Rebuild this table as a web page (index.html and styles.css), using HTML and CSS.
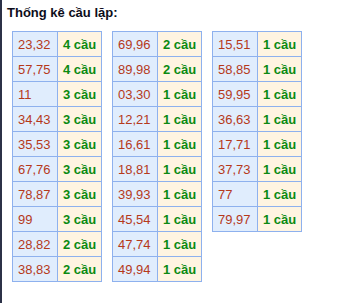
FILE: index.html
```html
<!DOCTYPE html>
<html lang="vi">
<head>
<meta charset="utf-8">
<link rel="stylesheet" href="styles.css">
</head>
<body>
<div class="wrap">
  <h3 class="title">Thống kê cầu lặp:</h3>
  <div class="tables">
    <table class="tk">
      <colgroup><col class="c1"><col class="c2"></colgroup>
      <tr><td class="num">23,32</td><td class="cnt">4 cầu</td></tr>
      <tr><td class="num">57,75</td><td class="cnt">4 cầu</td></tr>
      <tr><td class="num">11</td><td class="cnt">3 cầu</td></tr>
      <tr><td class="num">34,43</td><td class="cnt">3 cầu</td></tr>
      <tr><td class="num">35,53</td><td class="cnt">3 cầu</td></tr>
      <tr><td class="num">67,76</td><td class="cnt">3 cầu</td></tr>
      <tr><td class="num">78,87</td><td class="cnt">3 cầu</td></tr>
      <tr><td class="num">99</td><td class="cnt">3 cầu</td></tr>
      <tr><td class="num">28,82</td><td class="cnt">2 cầu</td></tr>
      <tr><td class="num">38,83</td><td class="cnt">2 cầu</td></tr>
    </table>
    <table class="tk">
      <colgroup><col class="c1"><col class="c2"></colgroup>
      <tr><td class="num">69,96</td><td class="cnt">2 cầu</td></tr>
      <tr><td class="num">89,98</td><td class="cnt">2 cầu</td></tr>
      <tr><td class="num">03,30</td><td class="cnt">1 cầu</td></tr>
      <tr><td class="num">12,21</td><td class="cnt">1 cầu</td></tr>
      <tr><td class="num">16,61</td><td class="cnt">1 cầu</td></tr>
      <tr><td class="num">18,81</td><td class="cnt">1 cầu</td></tr>
      <tr><td class="num">39,93</td><td class="cnt">1 cầu</td></tr>
      <tr><td class="num">45,54</td><td class="cnt">1 cầu</td></tr>
      <tr><td class="num">47,74</td><td class="cnt">1 cầu</td></tr>
      <tr><td class="num">49,94</td><td class="cnt">1 cầu</td></tr>
    </table>
    <table class="tk">
      <colgroup><col class="c1"><col class="c2"></colgroup>
      <tr><td class="num">15,51</td><td class="cnt">1 cầu</td></tr>
      <tr><td class="num">58,85</td><td class="cnt">1 cầu</td></tr>
      <tr><td class="num">59,95</td><td class="cnt">1 cầu</td></tr>
      <tr><td class="num">36,63</td><td class="cnt">1 cầu</td></tr>
      <tr><td class="num">17,71</td><td class="cnt">1 cầu</td></tr>
      <tr><td class="num">37,73</td><td class="cnt">1 cầu</td></tr>
      <tr><td class="num">77</td><td class="cnt">1 cầu</td></tr>
      <tr><td class="num">79,97</td><td class="cnt">1 cầu</td></tr>
    </table>
  </div>
</div>
</body>
</html>
```
FILE: styles.css
```css
html, body {
  margin: 0;
  padding: 0;
  background: #ffffff;
}
body {
  font-family: "Liberation Sans", Arial, sans-serif;
  border-left: 2px solid #2c3147;
  min-height: 303px;
  box-sizing: border-box;
}
.wrap {
  padding: 4px 0 0 5px;
}
.title {
  margin: 0 0 9px 0;
  font-size: 13px;
  line-height: 18px;
  font-weight: bold;
  color: #0d0d1a;
}
.tables {
  display: flex;
  align-items: flex-start;
  gap: 10px;
  margin-left: 5px;
}
.tk {
  border-collapse: collapse;
  table-layout: fixed;
  width: 89px;
}
.c1 { width: 45px; }
.c2 { width: 44px; }
.tk td {
  border: 1px solid #8eb1ee;
  height: 25px;
  padding: 0 0 0 5px;
  font-size: 13px;
  white-space: nowrap;
  overflow: hidden;
  box-sizing: border-box;
}
.num {
  background: #e0edfd;
  color: #b5391b;
}
.cnt {
  background: #fff4e1;
  color: #0b8a12;
  font-weight: bold;
}
```
